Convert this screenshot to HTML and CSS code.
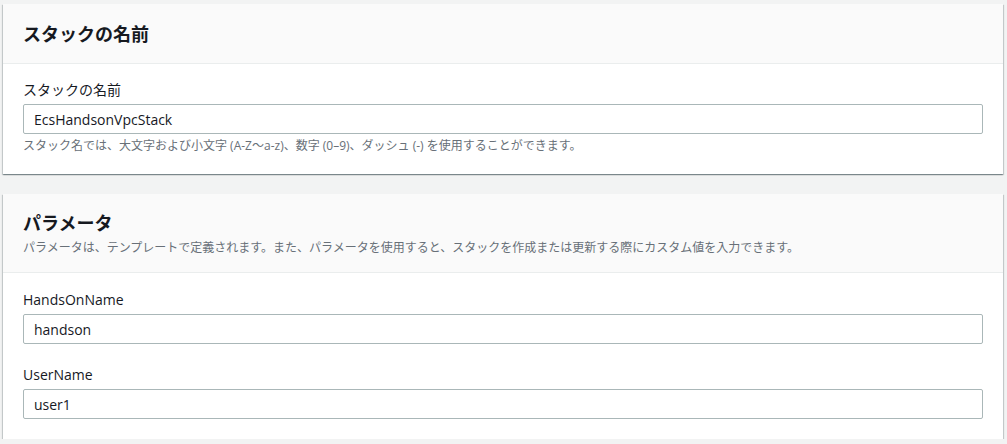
FILE: index.html
```html
<!DOCTYPE html>
<html lang="ja">
<head>
  <meta charset="UTF-8">
  <meta name="viewport" content="width=device-width, initial-scale=1.0">
  <title>スタックの詳細を指定</title>
  <link rel="stylesheet" href="styles.css">
</head>
<body>

<div class="page">
  <div class="card">
    <div class="card-header">
      <h2>スタックの名前</h2>
    </div>
    <div class="card-body">
      <div class="field">
        <label for="stackName">スタックの名前</label>
        <input type="text" id="stackName" value="EcsHandsonVpcStack">
        <p class="hint">スタック名では、大文字および小文字 (A-Z〜a-z)、数字 (0–9)、ダッシュ (-) を使用することができます。</p>
      </div>
    </div>
  </div>

  <div class="card params">
    <div class="card-header">
      <h2>パラメータ</h2>
      <p class="desc">パラメータは、テンプレートで定義されます。また、パラメータを使用すると、スタックを作成または更新する際にカスタム値を入力できます。</p>
    </div>
    <div class="card-body">
      <div class="field">
        <label for="handsOnName">HandsOnName</label>
        <input type="text" id="handsOnName" value="handson">
      </div>
      <div class="field">
        <label for="userName">UserName</label>
        <input type="text" id="userName" value="user1">
      </div>
    </div>
  </div>
</div>

</body>
</html>
```

FILE: styles.css
```css
:root {
  --page-bg: #f2f3f3;
  --card-bg: #ffffff;
  --header-bg: #fafafa;
  --divider: #eaeded;
  --text: #16191f;
  --muted: #687078;
  --input-border: #aab7b8;
}
body {
  margin: 0;
  background: var(--page-bg);
  color: var(--text);
  font-family: "Open Sans", "Noto Sans CJK JP", sans-serif;
}
.page {
  padding: 4px 4px 0 3px;
  display: flex;
  flex-direction: column;
  gap: 20px;
}
.card {
  background: var(--card-bg);
  box-shadow: 0 1px 1px 0 rgba(0, 28, 36, 0.3),
              1px 1px 1px 0 rgba(0, 28, 36, 0.15),
              -1px 1px 1px 0 rgba(0, 28, 36, 0.15);
}
.card-header {
  background: var(--header-bg);
  border-bottom: 1px solid var(--divider);
  padding: 19px 20px 18px;
}
.params .card-header {
  padding: 18px 20px 16px;
}
h2 {
  margin: 0;
  font-size: 18px;
  line-height: 22px;
  font-weight: 700;
}
.desc {
  margin: 6px 0 0;
  font-size: 12px;
  line-height: 16px;
  color: var(--muted);
}
.card-body {
  padding: 16px 20px 20px;
  display: flex;
  flex-direction: column;
  gap: 21px;
}
.params .card-body {
  padding-top: 17px;
}
label {
  display: block;
  font-size: 14px;
  line-height: 20px;
}
input {
  display: block;
  box-sizing: border-box;
  width: 100%;
  height: 30px;
  margin-top: 4px;
  padding: 0 10px;
  border: 1px solid var(--input-border);
  border-radius: 2px;
  background: #fff;
  color: var(--text);
  font-family: inherit;
  font-size: 14px;
}
.hint {
  margin: 4px 0 0;
  font-size: 12px;
  line-height: 16px;
  color: var(--muted);
}
```
